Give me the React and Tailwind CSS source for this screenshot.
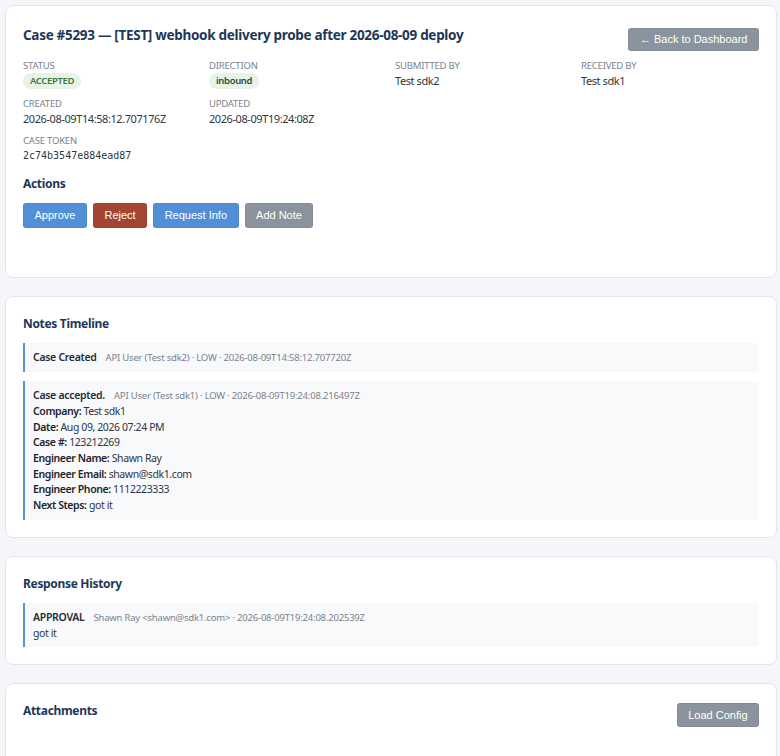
import React from 'react'

const sans = { fontFamily: '"Noto Sans", "Open Sans", sans-serif' }
const arial = { fontFamily: '"Liberation Sans", Arial, sans-serif' }

const meta = [
  { label: 'Status', badge: 'ACCEPTED', tone: 'text-[#3b7a3f]' },
  { label: 'Direction', badge: 'inbound', tone: 'text-[#2f4d33]' },
  { label: 'Submitted By', value: 'Test sdk2' },
  { label: 'Received By', value: 'Test sdk1' },
  { label: 'Created', value: '2026-08-09T14:58:12.707176Z' },
  { label: 'Updated', value: '2026-08-09T19:24:08Z' }
]

const acceptedFields = [
  ['Company:', 'Test sdk1'],
  ['Date:', 'Aug 09, 2026 07:24 PM'],
  ['Case #:', '123212269'],
  ['Engineer Name:', 'Shawn Ray'],
  ['Engineer Email:', 'shawn@sdk1.com'],
  ['Engineer Phone:', '1112223333'],
  ['Next Steps:', 'got it']
]

function Card({ children, className = '' }) {
  return (
    <section className={`rounded-lg border border-[#e2e6ec] bg-white px-[17px] pt-[18px] ${className}`}>
      {children}
    </section>
  )
}

function Btn({ children, color, className = '' }) {
  return (
    <button
      type="button"
      className={`rounded-[3px] border border-black/5 px-[10.5px] text-[11px] leading-none text-white ${color} ${className}`}
      style={arial}
    >
      {children}
    </button>
  )
}

function Field({ label, value, badge, tone }) {
  return (
    <div className="flex flex-col">
      <span className="text-[9.5px] uppercase leading-[14px] tracking-[-0.2px] text-[#7b828c]">{label}</span>
      {badge ? (
        <span
          className={`self-start rounded-full bg-[#e7f3e8] px-[7px] text-[9.5px] font-semibold leading-[16px] tracking-[-0.35px] ${tone}`}
        >
          {badge}
        </span>
      ) : (
        <span className="text-[11px] leading-[16px] tracking-[-0.42px] text-[#30363f]">{value}</span>
      )}
    </div>
  )
}

function SectionTitle({ children }) {
  return (
    <h2 className="text-[12px] font-bold leading-[18px] tracking-[-0.32px] text-[#1d3759]">{children}</h2>
  )
}

function Entry({ title, info, children }) {
  return (
    <div className="rounded-r-[4px] border-l-2 border-[#5b8fd6] bg-[#f8f9fb] py-[6px] pl-[8px] pr-3">
      <div className="flex items-baseline gap-[9px] leading-[17px]">
        <span className="text-[10.5px] font-semibold tracking-[-0.3px] text-[#262c34]">{title}</span>
        <span className="text-[9.5px] tracking-[-0.2px] text-[#7b828c]">{info}</span>
      </div>
      {children}
    </div>
  )
}

export default function App() {
  return (
    <div className="min-h-screen bg-[#f4f6fa] pb-6 pl-[5px] pr-[3px] pt-[5px]" style={sans}>
      <div className="flex flex-col gap-[18px]">
        <Card className="pb-[49px]">
          <div className="flex items-start justify-between">
            <h1 className="text-[13.5px] font-bold leading-[22px] tracking-[-0.3px] text-[#1d3759]">
              Case #5293 — [TEST] webhook delivery probe after 2026-08-09 deploy
            </h1>
            <Btn color="bg-[#8b949e]" className="mt-[4px] h-[23px]">← Back to Dashboard</Btn>
          </div>

          <div className="mt-[8px] grid grid-cols-4 gap-x-2 gap-y-[7.5px]">
            {meta.map((m) => (
              <Field key={m.label} {...m} />
            ))}
            <div className="col-span-4 flex flex-col">
              <span className="text-[9.5px] uppercase leading-[14px] tracking-[-0.2px] text-[#7b828c]">
                Case Token
              </span>
              <span
                className="text-[10px] leading-[16px] text-[#30363f]"
                style={{ fontFamily: '"DejaVu Sans Mono", "Liberation Mono", monospace' }}
              >
                2c74b3547e884ead87
              </span>
            </div>
          </div>

          <div className="mt-[11px]">
            <SectionTitle>Actions</SectionTitle>
          </div>
          <div className="mt-[10px] flex gap-[6px]">
            <Btn color="bg-[#5190d6]" className="h-[25px]">Approve</Btn>
            <Btn color="bg-[#a34533]" className="h-[25px]">Reject</Btn>
            <Btn color="bg-[#5190d6]" className="h-[25px]">Request Info</Btn>
            <Btn color="bg-[#8b949e]" className="h-[25px]">Add Note</Btn>
          </div>
        </Card>

        <Card className="pb-[17px]">
          <SectionTitle>Notes Timeline</SectionTitle>
          <div className="mt-[10px] flex flex-col gap-[9px]">
            <Entry title="Case Created" info="API User (Test sdk2) · LOW · 2026-08-09T14:58:12.707720Z" />
            <Entry title="Case accepted." info="API User (Test sdk1) · LOW · 2026-08-09T19:24:08.216497Z">
              <div className="text-[10.5px] leading-[15.67px] tracking-[-0.4px] text-[#30363f]">
                {acceptedFields.map(([k, v]) => (
                  <div key={k}>
                    <span className="font-semibold text-[#1f242b]">{k}</span> {v}
                  </div>
                ))}
              </div>
            </Entry>
          </div>
        </Card>

        <Card className="pb-[17px]">
          <SectionTitle>Response History</SectionTitle>
          <div className="mt-[10px]">
            <Entry title="APPROVAL" info="Shawn Ray <shawn@sdk1.com> · 2026-08-09T19:24:08.202539Z">
              <div className="text-[10.5px] leading-[15.67px] tracking-[-0.4px] text-[#30363f]">got it</div>
            </Entry>
          </div>
        </Card>

        <Card className="pb-[40px]">
          <div className="flex items-start justify-between">
            <SectionTitle>Attachments</SectionTitle>
            <Btn color="bg-[#8b949e]" className="mt-[1px] h-[24px]">Load Config</Btn>
          </div>
        </Card>
      </div>
    </div>
  )
}
